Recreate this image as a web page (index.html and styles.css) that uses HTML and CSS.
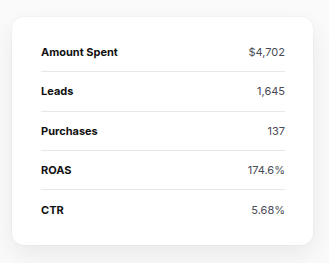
FILE: index.html
```html
<!DOCTYPE html>
<html>
<head>
<meta charset="utf-8">
<link rel="stylesheet" href="styles.css">
</head>
<body>
<div class="card">
  <div class="row"><span class="label">Amount Spent</span><span class="value">$4,702</span></div>
  <div class="row"><span class="label">Leads</span><span class="value">1,645</span></div>
  <div class="row"><span class="label">Purchases</span><span class="value">137</span></div>
  <div class="row"><span class="label">ROAS</span><span class="value">174.6%</span></div>
  <div class="row"><span class="label">CTR</span><span class="value">5.68%</span></div>
</div>
</body>
</html>
```
FILE: styles.css
```css
html, body {
  margin: 0;
  padding: 0;
  background: #fafafa;
}
body {
  padding: 17px 16px 20px 12px;
  font-family: Inter, "Open Sans", sans-serif;
}
.card {
  width: 301px;
  box-sizing: border-box;
  background: #fff;
  border-radius: 12px;
  box-shadow: 0 10px 24px rgba(0,0,0,0.07), 0 0 0 1px rgba(0,0,0,0.02);
  padding: 16px 28px 16px 29px;
}
.row {
  display: flex;
  justify-content: space-between;
  align-items: center;
  height: 38.25px;
  border-bottom: 1px solid #e8e8e8;
}
.row:last-child {
  border-bottom: none;
  height: 39px;
}
.label {
  font-size: 11px;
  font-weight: 700;
  color: #111;
}
.value {
  font-size: 11px;
  color: #4a4a55;
}
```
